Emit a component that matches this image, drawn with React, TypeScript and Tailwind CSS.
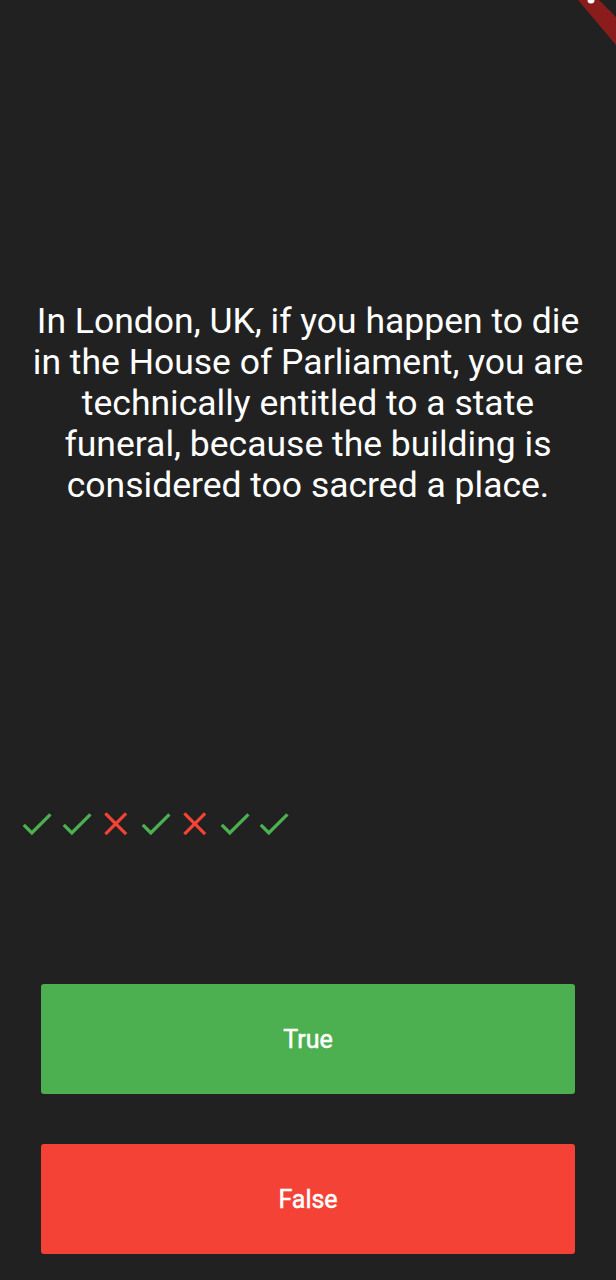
const CHECK = "M9 16.17L4.83 12l-1.42 1.41L9 19 21 7l-1.41-1.41z";
const CLOSE =
  "M19 6.41L17.59 5 12 10.59 6.41 5 5 6.41 10.59 12 5 17.59 6.41 19 12 13.41 17.59 19 19 17.59 13.41 12z";

const scores = [true, true, false, true, false, true, true];

const ScoreIcon = ({ correct }: { correct: boolean }) => (
  <svg viewBox="0 0 24 24" className="h-[39.5px] w-[39.5px] shrink-0">
    <path d={correct ? CHECK : CLOSE} fill={correct ? "#4caf50" : "#f44336"} />
  </svg>
);

// Flutter's debug ribbon, only the corner of it shows in the screenshot
const DebugBanner = () => (
  <svg className="pointer-events-none absolute right-0 top-0 h-[50px] w-[50px]" viewBox="566 0 50 50">
    <polygon points="578,0 599,0 616,17 616,45" fill="#8b1c1c" />
    <circle cx="591" cy="0" r="3.5" fill="#ffffff" />
  </svg>
);

const questionLines = [
  "In London, UK, if you happen to die",
  "in the House of Parliament, you are",
  "technically entitled to a state",
  "funeral, because the building is",
  "considered too sacred a place.",
];

const App = () => {
  return (
    <div className="relative flex h-[1280px] w-full flex-col overflow-hidden bg-[#212121] font-['Roboto',sans-serif]">
      {/* Question */}
      <div className="flex h-[806px] items-center justify-center px-[20px]">
        <p className="text-center text-[35.5px] leading-[41px] text-white">
          {questionLines.map((line) => (
            <span key={line} className="block whitespace-nowrap">
              {line}
            </span>
          ))}
        </p>
      </div>

      {/* Score keeper */}
      <div className="-mt-[2px] flex h-[40px] pl-[17px]">
        {scores.map((s, i) => (
          <ScoreIcon key={i} correct={s} />
        ))}
      </div>

      {/* Answers */}
      <div className="flex flex-col gap-[50px] px-[41px] pt-[140px]">
        <button className="flex h-[110px] items-center justify-center rounded-[3px] bg-[#4caf50] pt-[2px] text-[25px] font-normal text-white [-webkit-text-stroke:0.5px_white]">
          True
        </button>
        <button className="flex h-[110px] items-center justify-center rounded-[3px] bg-[#f44336] pt-[2px] text-[25px] font-normal text-white [-webkit-text-stroke:0.5px_white]">
          False
        </button>
      </div>

      <DebugBanner />
    </div>
  );
};

export default App;
